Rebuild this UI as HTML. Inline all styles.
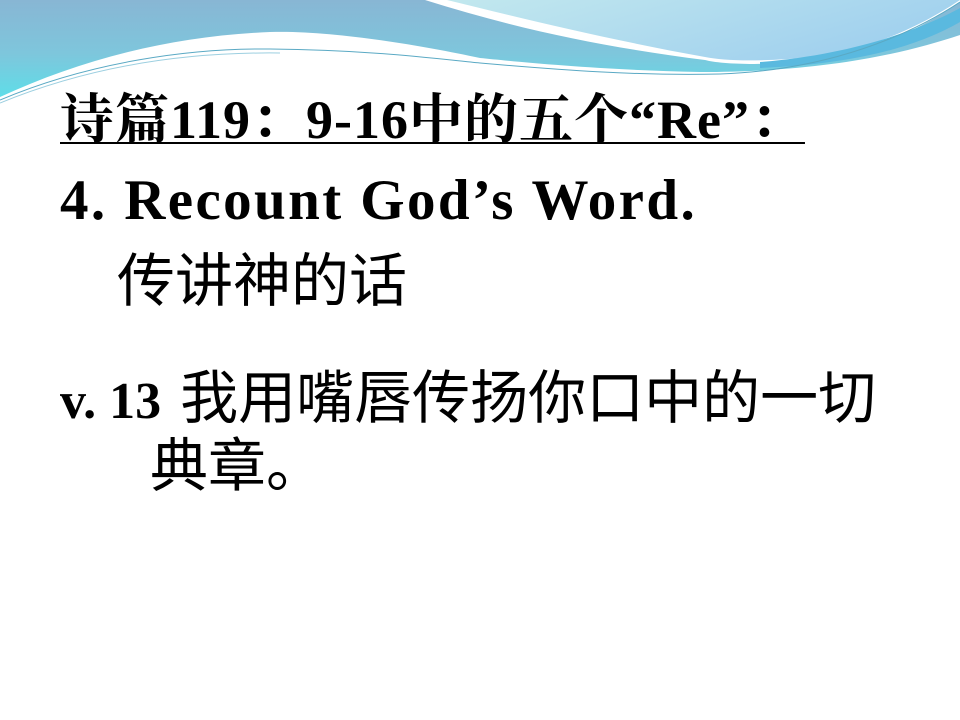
<!DOCTYPE html>
<html><head><meta charset="utf-8"><style>
html,body{margin:0;padding:0;width:960px;height:720px;background:#fff;overflow:hidden;position:relative}
.t{position:absolute;white-space:nowrap;font-family:"Liberation Serif","Noto Serif CJK SC","Noto Sans CJK SC",serif;font-weight:bold;color:#000;font-size:57px;line-height:1}
.c{font-family:"Liberation Serif","Noto Sans CJK SC",sans-serif;font-weight:normal;font-size:58px}
</style></head><body>
<svg width="960" height="130" style="position:absolute;left:0;top:0">
<defs>
<linearGradient id="g1" x1="0" y1="0" x2="0" y2="1"><stop offset="0" stop-color="#88b6d4"/><stop offset="0.55" stop-color="#7ec6dc"/><stop offset="1" stop-color="#5fdde8"/></linearGradient>
<linearGradient id="g2" x1="0" y1="0" x2="1" y2="0.4"><stop offset="0" stop-color="#c2e8ee"/><stop offset="1" stop-color="#a0d0ee"/></linearGradient>
</defs>
<path d="M0,0 H960 V35 C900,55 820,72 700,72 C600,70 520,62 480,58 C420,45 330,30 270,32 C170,36 80,60 0,97 Z" fill="url(#g1)"/>
<path d="M425,0 H960 V2 C930,22 880,52 813,61 C760,66 720,64 705,60 C610,48 520,30 425,0 Z" fill="#fff"/>
<path d="M447,0 H960 C930,20 880,48 813,57 C760,62 725,61 705,57 C610,40 520,18 447,0 Z" fill="url(#g2)"/>
<path d="M760,62 C850,55 920,30 960,8 V22 C920,45 860,64 760,68 Z" fill="#5ab9df"/>
<path d="M0,100 C90,62 190,48 270,49 C370,50 430,58 480,63 C560,70 640,76 720,74 C830,70 910,35 960,2" stroke="#5aa9c4" stroke-width="1" fill="none"/>
<path d="M0,103 C100,62 200,52 280,53" stroke="#9ccfe0" stroke-width="1" fill="none"/>
</svg>
<div class="t" style="left:60px;top:93px;font-size:54px;letter-spacing:1px;text-decoration:underline;text-underline-offset:4px;text-decoration-thickness:2px">诗篇119：9-16中的五个“Re”：</div>
<div class="t" style="left:60px;top:172px;letter-spacing:2.4px">4. Recount God’s Word.</div>
<div class="t c" style="left:117px;top:253px">传讲神的话</div>
<div class="t" style="left:60px;top:370px;font-size:52px">v. 13 <span class="c" style="margin-left:6px">我用嘴唇传扬你口中的一切</span></div>
<div class="t c" style="left:150px;top:438px">典章。</div>
</body></html>
